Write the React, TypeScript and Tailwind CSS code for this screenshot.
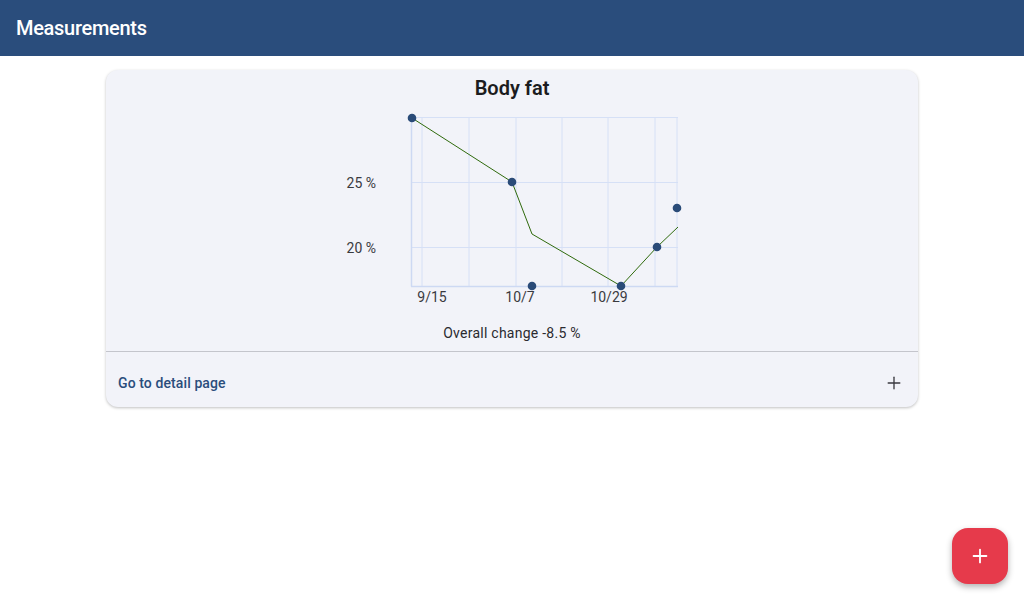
import { Plus } from "lucide-react";

const points: [number, number][] = [
  [78, 16],
  [178, 80],
  [198, 184],
  [287, 184],
  [323, 145],
  [343, 106],
];

const trend = "78,16 178,80 198,132 287,184 323,145 344,125";

function BodyFatChart() {
  const vLines = [88, 135, 182, 228, 274, 321, 343];
  const hLines = [15, 80, 145];
  return (
    <svg width={356} height={218} className="block mx-auto">
      {vLines.map((x) => (
        <line key={x} x1={x} x2={x} y1={15} y2={184} stroke="#d6e0f6" strokeWidth={1} />
      ))}
      {hLines.map((y) => (
        <line key={y} x1={77.5} x2={344} y1={y + 0.5} y2={y + 0.5} stroke="#d6e0f6" strokeWidth={1} />
      ))}
      <line x1={77.5} x2={77.5} y1={15} y2={184.5} stroke="#cdd9f3" strokeWidth={1.5} />
      <line x1={77} x2={344} y1={184.5} y2={184.5} stroke="#cdd9f3" strokeWidth={1.5} />
      <polyline points={trend} fill="none" stroke="#2f6a0c" strokeWidth={1} />
      {points.map(([x, y], i) => (
        <circle key={i} cx={x} cy={y} r={4.3} fill="#2a4b78" />
      ))}
      <g fill="#3a3a3f" fontSize={14} fontFamily="Roboto, sans-serif">
        <text x={42} y={86} textAnchor="end">25 %</text>
        <text x={42} y={151} textAnchor="end">20 %</text>
        <text x={98} y={200} textAnchor="middle">9/15</text>
        <text x={186} y={200} textAnchor="middle">10/7</text>
        <text x={275} y={200} textAnchor="middle">10/29</text>
      </g>
    </svg>
  );
}

export default function App() {
  return (
    <div className="min-h-[600px] bg-white font-['Roboto',sans-serif] relative">
      <header className="h-14 bg-[#2a4d7c] flex items-center px-4">
        <h1 className="text-white text-[20px] font-medium tracking-[-0.3px]">Measurements</h1>
      </header>
      <main className="pt-[14px]">
        <div className="w-[812px] mx-auto rounded-xl bg-[#f2f3f9] shadow-[0_1px_3px_rgba(0,0,0,0.25)] overflow-hidden">
          <div className="pt-1 pb-2 flex flex-col items-center">
            <h2 className="text-[20px] leading-7 font-semibold text-[#1c1c20]">Body fat</h2>
            <BodyFatChart />
            <p className="mt-[3px] text-sm leading-5 tracking-[0.25px] text-[#2a2a2f]">Overall change -8.5 %</p>
          </div>
          <div className="h-px bg-[#c4c5cc]" />
          <div className="h-[55px] pt-[6px] flex items-center justify-between pl-3 pr-[14px]">
            <span className="text-sm font-medium tracking-[0.1px] text-[#2a4d7c]">Go to detail page</span>
            <Plus size={20} strokeWidth={1.6} className="text-[#3a3a40]" />
          </div>
        </div>
      </main>
      <button className="absolute right-4 bottom-4 w-14 h-14 rounded-2xl bg-[#e63a4b] flex items-center justify-center shadow-[0_3px_6px_rgba(0,0,0,0.3)]">
        <Plus size={22} strokeWidth={2} className="text-white" />
      </button>
    </div>
  );
}
